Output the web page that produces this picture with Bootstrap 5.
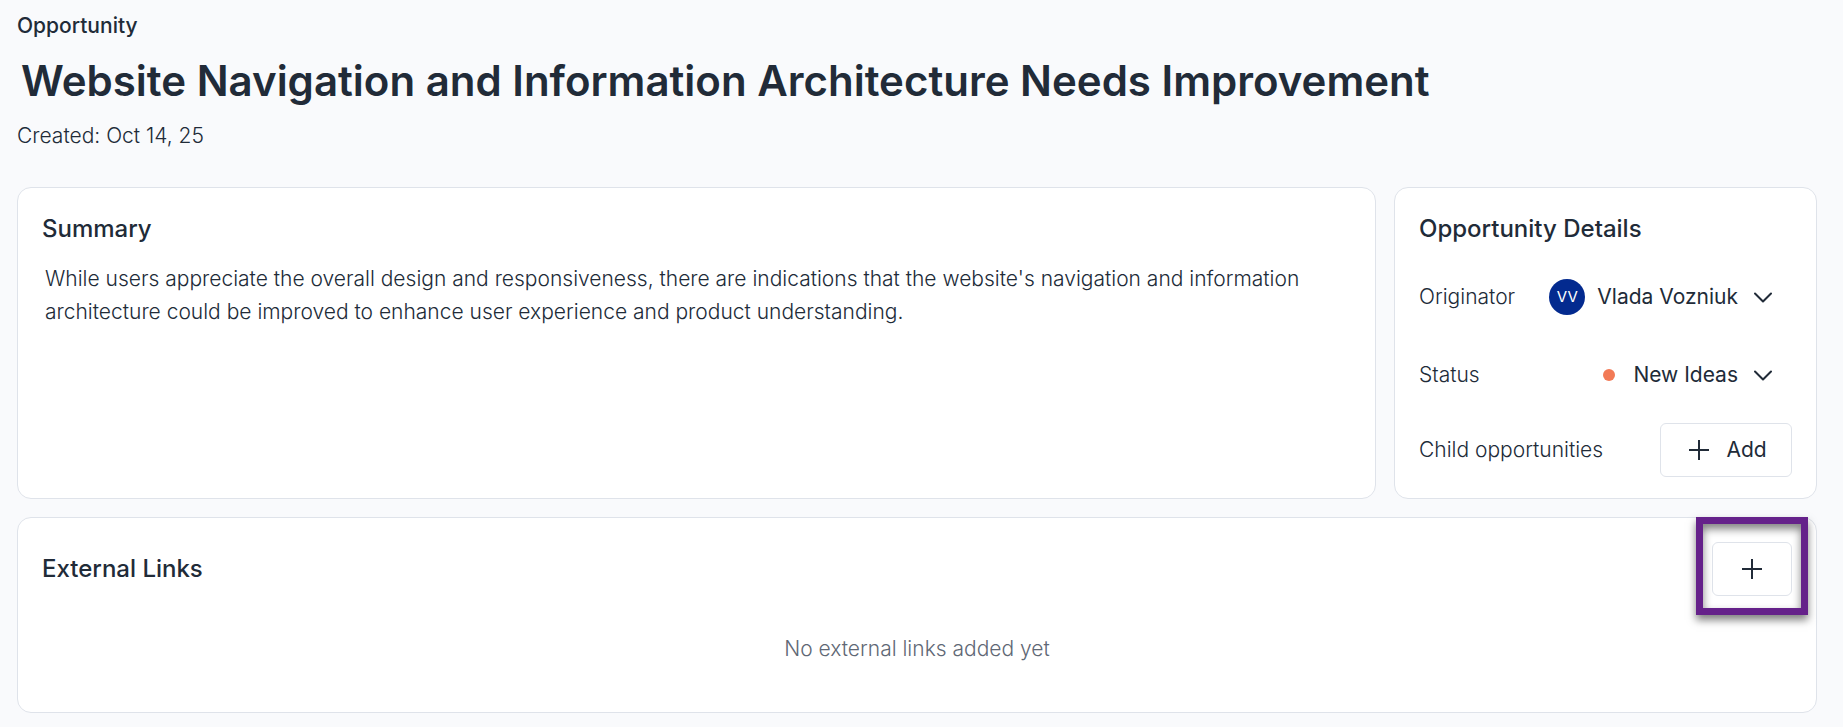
<!DOCTYPE html>
<html lang="en">
<head>
<meta charset="utf-8">
<title>Opportunity</title>
<link href="https://cdn.jsdelivr.net/npm/bootstrap@5.3.0/dist/css/bootstrap.min.css" rel="stylesheet">
<style>
html,body{height:100%}
body{background:#f9fafc;color:#212b38;font-family:Inter,"Liberation Sans",sans-serif;font-size:21px;overflow:hidden}
.page-wrap{padding:13px 26px 0 17px}
.kicker{font-size:21px;font-weight:500;line-height:26px}
.page-title{font-size:42px;font-weight:600;line-height:56px;margin:14px 0 13px 4px;color:#212b38}
.created{font-size:21px;font-weight:300;line-height:28px;margin-bottom:37px}
.panel{background:#fff;border:1px solid #dfe3ea;border-radius:14px}
.top-row{display:flex;gap:18px;margin-bottom:18px}
.summary-panel{flex:1 1 auto;height:312px;padding:25px 24px}
.details-panel{flex:0 0 423px;height:312px;padding:25px 24px}
.panel-title{font-size:24px;font-weight:500;line-height:32px;margin:0}
.summary-text{font-size:21px;font-weight:300;line-height:33px;margin:17px 0 0 3px}
.detail-row{display:flex;align-items:center;justify-content:space-between;font-weight:300}
.picker{display:flex;align-items:center;font-weight:400;padding-right:20px}
.avatar{width:36px;height:36px;border-radius:50%;background:#032a8f;color:#fff;font-size:15px;display:flex;align-items:center;justify-content:center;margin-right:12px}
.dot{width:12px;height:12px;border-radius:50%;background:#f27a56;margin-right:18px}
.chev{width:18px;height:18px;margin-left:16px}
.line-btn{background:#fff;border:1px solid #dfe3ea;border-radius:6px;color:#212b38;display:inline-flex;align-items:center;justify-content:center;height:54px;padding:0;font-size:21px;font-weight:400}
.add-btn{width:132px;gap:17px;padding-left:4px}
.links-panel{height:196px;padding:24px;position:relative}
.links-head{display:flex;align-items:center;justify-content:space-between}
.empty-note{text-align:center;color:#5f6875;font-weight:300;margin-top:39px;line-height:28px}
.callout{position:absolute;top:-1px;right:8px;width:112px;height:98px;border:7px solid #65218a;box-shadow:0 5px 8px rgba(0,0,0,.5),inset 0 5px 8px rgba(0,0,0,.5);pointer-events:none}
</style>
</head>
<body>
<div class="page-wrap">
  <div class="kicker">Opportunity</div>
  <h1 class="page-title">Website Navigation and Information Architecture Needs Improvement</h1>
  <div class="created">Created: Oct 14, 25</div>
  <div class="top-row">
    <section class="panel summary-panel">
      <h2 class="panel-title">Summary</h2>
      <p class="summary-text">While users appreciate the overall design and responsiveness, there are indications that the website's navigation and information architecture could be improved to enhance user experience and product understanding.</p>
    </section>
    <section class="panel details-panel">
      <h2 class="panel-title">Opportunity Details</h2>
      <div class="detail-row" style="height:36px;margin-top:34px">
        <span>Originator</span>
        <span class="picker"><span class="avatar">VV</span>Vlada Vozniuk<svg class="chev" viewBox="0 0 18 18" fill="none" stroke="#212b38" stroke-width="2" stroke-linecap="round" stroke-linejoin="round"><path d="M1 5.500 9 13.500l8-8"/></svg></span>
      </div>
      <div class="detail-row" style="height:36px;margin-top:42px">
        <span>Status</span>
        <span class="picker"><span class="dot"></span>New Ideas<svg class="chev" viewBox="0 0 18 18" fill="none" stroke="#212b38" stroke-width="2" stroke-linecap="round" stroke-linejoin="round"><path d="M1 5.500 9 13.500l8-8"/></svg></span>
      </div>
      <div class="detail-row" style="margin-top:30px">
        <span>Child opportunities</span>
        <button class="btn line-btn add-btn" type="button"><svg width="20" height="20" viewBox="0 0 20 20" fill="none" stroke="#212b38" stroke-width="2"><path d="M10 0v20M0 10h20"/></svg>Add</button>
      </div>
    </section>
  </div>
  <section class="panel links-panel">
    <div class="links-head">
      <h2 class="panel-title">External Links</h2>
      <button class="btn line-btn" type="button" style="width:80px"><svg width="20" height="20" viewBox="0 0 20 20" fill="none" stroke="#212b38" stroke-width="2"><path d="M10 0v20M0 10h20"/></svg></button>
    </div>
    <div class="empty-note">No external links added yet</div>
    <div class="callout"></div>
  </section>
</div>
<script src="https://cdn.jsdelivr.net/npm/bootstrap@5.3.0/dist/js/bootstrap.bundle.min.js"></script>
</body>
</html>
